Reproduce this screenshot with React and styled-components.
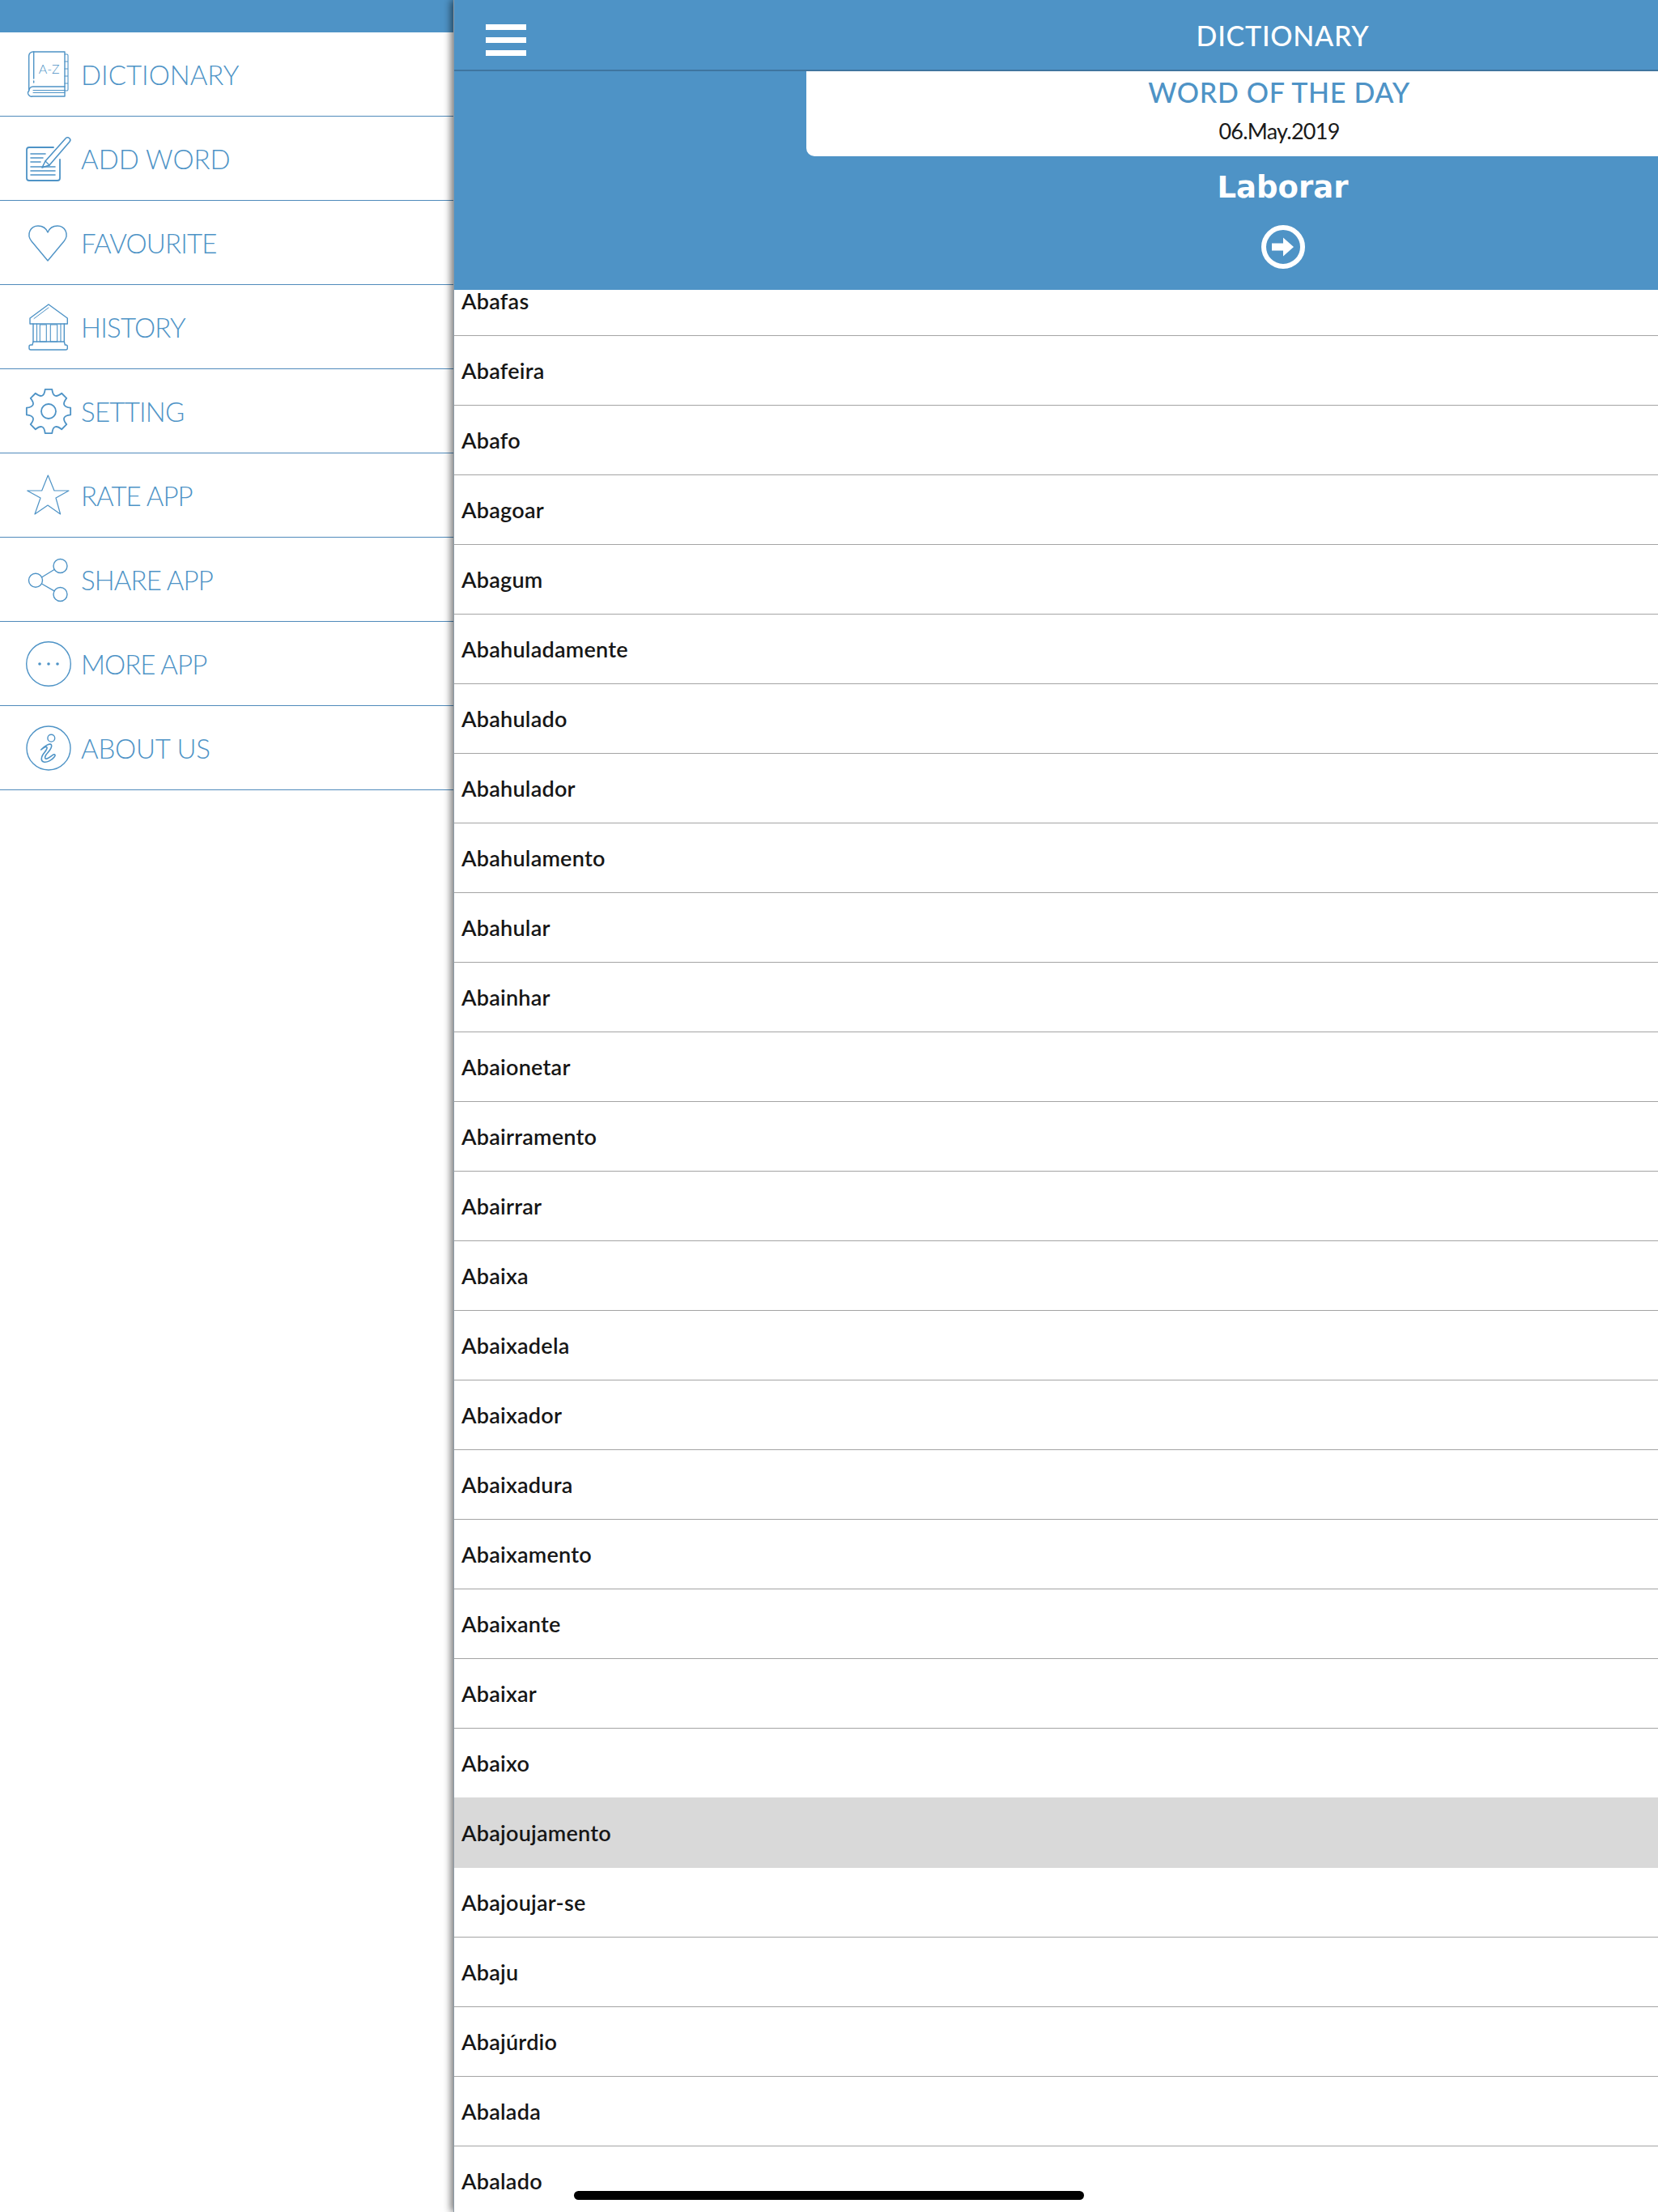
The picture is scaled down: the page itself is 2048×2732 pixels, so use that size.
import React from "react";
import styled, { createGlobalStyle } from "styled-components";

const BLUE = "#4e93c6";

const GlobalStyle = createGlobalStyle`
  html, body {
    margin: 0;
    padding: 0;
    background: #fff;
  }
  * {
    box-sizing: border-box;
  }
`;

const Screen = styled.div`
  display: flex;
  width: 2048px;
  height: 2732px;
  overflow: hidden;
  position: relative;
  font-family: "Lato", "Liberation Sans", sans-serif;
`;

const Drawer = styled.nav`
  width: 560px;
  flex-shrink: 0;
  background: #fff;
`;

const DrawerTop = styled.div`
  height: 40px;
  background: ${BLUE};
`;

const MenuItem = styled.div`
  display: flex;
  align-items: center;
  height: 104px;
  padding-left: 30px;
  border-bottom: 1px solid #4f8abb;
`;

const MenuIcon = styled.svg`
  width: 60px;
  height: 60px;
  flex-shrink: 0;
  fill: none;
  stroke: ${BLUE};
  stroke-width: 1.4;
  stroke-linejoin: round;
  stroke-linecap: round;
`;

const MenuLabel = styled.span`
  margin-left: 10px;
  font-size: 33px;
  font-weight: 300;
  color: ${BLUE};
  letter-spacing: ${(p) => p.$track}px;
  white-space: nowrap;
`;

/* the panel keeps the full screen width while the drawer pushes it aside */
const Main = styled.main`
  width: 2048px;
  flex-shrink: 0;
  display: flex;
  flex-direction: column;
  background: #fff;
  position: relative;
  box-shadow: -3px 0 9px rgba(0, 0, 0, 0.55);
  border-left: 1px solid #8d9aa5;
`;

const Banner = styled.header`
  height: 358px;
  flex-shrink: 0;
  background: ${BLUE};
  display: flex;
  flex-direction: column;
  position: relative;
  z-index: 1;
`;

const TopBar = styled.div`
  height: 88px;
  flex-shrink: 0;
  display: grid;
  grid-template-columns: 1fr auto 1fr;
  align-items: center;
  padding-left: 39px;
  border-bottom: 2px solid #3f759f;
`;

const Burger = styled.div`
  width: 50px;
  margin-top: 13px;
  display: flex;
  flex-direction: column;
  gap: 9px;
  span {
    display: block;
    height: 7px;
    background: #fff;
  }
`;

const TopTitle = styled.h1`
  margin: 0 0 0 -39px;
  font-size: 34px;
  font-weight: 500;
  color: #fff;
  letter-spacing: 0.75px;
`;

const WordCard = styled.div`
  margin-left: 435px;
  width: 1168px;
  height: 105px;
  flex-shrink: 0;
  background: #fff;
  border-bottom-left-radius: 10px;
  display: flex;
  flex-direction: column;
  align-items: center;
`;

const CardTitle = styled.div`
  margin-top: 6px;
  font-size: 34px;
  line-height: 40px;
  font-weight: 500;
  color: ${BLUE};
  letter-spacing: 0.7px;
`;

const CardDate = styled.div`
  margin-top: 11px;
  font-size: 27px;
  line-height: 34px;
  color: #1a1a1a;
  letter-spacing: -0.75px;
`;

const WordName = styled.div`
  margin-top: 17px;
  text-align: center;
  font-family: "DejaVu Sans", sans-serif;
  font-size: 37px;
  line-height: 44px;
  font-weight: 700;
  color: #fff;
`;

const GoIcon = styled.svg`
  display: block;
  width: 54px;
  height: 54px;
  margin: 24px auto 0;
`;

const ListViewport = styled.div`
  flex: 1;
  min-height: 0;
  overflow: hidden;
`;

const WordList = styled.div`
  margin-top: -29px;
`;

const WordRow = styled.div`
  display: flex;
  align-items: center;
  height: 86px;
  padding: 0 0 1px 9px;
  font-size: 27px;
  font-weight: 600;
  letter-spacing: 0.25px;
  color: #161616;
  background: #fff;
  border-bottom: 1px solid #a4a4a4;
`;

// the selected row has no rules of its own and covers the one above it
const ActiveRow = styled(WordRow)`
  height: 87px;
  margin-top: -1px;
  padding-top: 1px;
  background: #d9d9d9;
  border-bottom-color: #d9d9d9;
`;

const HomeBar = styled.div`
  position: absolute;
  left: 709px;
  bottom: 15px;
  width: 630px;
  height: 11px;
  border-radius: 6px;
  background: #000;
  z-index: 2;
`;

const DictIcon = () => (
  <MenuIcon viewBox="0 0 60 60">
    <path d="M5.700 50V7a5 5 0 0 1 5-5H50v43" />
    <path d="M5.700 50a5 5 0 0 1 5-5H50v12H10a4.300 4.300 0 0 1-4.300-7z" />
    <path d="M11.700 2v33M11.700 38v2" />
    <path d="M11 49.500h39M11 52.500h39" strokeWidth="1.100" />
    <path
      strokeWidth="1.100"
      d="M50 5h2.500a1.500 1.500 0 0 1 1.500 1.500v42a1.500 1.500 0 0 1-1.500 1.500H50M50 14h4M50 23h4M50 32h4M50 41h4"
    />
    <text x="30.700" y="28.500" textAnchor="middle" fontFamily="Lato, sans-serif" fontWeight="300" fontSize="16" fill={BLUE} stroke="none">
      A-Z
    </text>
  </MenuIcon>
);

const AddWordIcon = () => (
  <MenuIcon viewBox="0 0 60 60">
    <path d="M36 16H6a3 3 0 0 0-3 3v35a3 3 0 0 0 3 3h35a3 3 0 0 0 3-3V31" strokeWidth="1.800" />
    <path d="M8 24h18M8 29h15M8 34h12M8 40h30M8 45h30M8 50h30" strokeWidth="1.600" />
    <path d="M26 33L51 5a3 3 0 0 1 5 4L31 38l-9 3z" strokeWidth="1.600" />
    <path d="M26 33l5 5" />
  </MenuIcon>
);

const HeartIcon = () => (
  <MenuIcon viewBox="0 0 60 60">
    <path d="M29 52L9 28C2 19 8 9 17 9c6 0 10 3 12 8 2-5 6-8 12-8 9 0 15 10 8 19z" />
  </MenuIcon>
);

const HistoryIcon = () => (
  <MenuIcon viewBox="0 0 60 60">
    <path d="M30 2L7 19v7h46.300v-7z" />
    <path d="M30 6L12 19.500" strokeWidth="1" />
    <path d="M11 26v22M49.300 26v22" />
    <path d="M15.500 26v22M19.300 27h8v21h-8zM32.300 27h8.400v21h-8.400zM45 26v22" strokeWidth="1.100" />
    <path d="M11 48h38.300l1 4h1a2 2 0 0 1 2 2v2a2 2 0 0 1-2 2H8a2 2 0 0 1-2-2v-2a2 2 0 0 1 2-2h2z" />
  </MenuIcon>
);

const polar = (deg, r) => {
  const a = (deg * Math.PI) / 180;
  return `${(30 + r * Math.cos(a)).toFixed(2)} ${(30 + r * Math.sin(a)).toFixed(2)}`;
};

// eight rounded teeth
const gearPath = () => {
  let d = `M${polar(-99, 27.5)}`;
  for (let i = 0; i < 8; i++) {
    const a = -90 + i * 45;
    d += ` L${polar(a + 9, 27.5)} Q${polar(a + 22.5, 15)} ${polar(a + 36, 27.5)}`;
  }
  return d + "Z";
};

const GearIcon = () => (
  <MenuIcon viewBox="0 0 60 60">
    <circle cx="30" cy="30" r="9" strokeWidth="1.800" />
    <path strokeWidth="1.800" d={gearPath()} />
  </MenuIcon>
);

const StarIcon = () => (
  <MenuIcon viewBox="0 0 60 60">
    <path strokeWidth="1.200" d="M29.300 5L37 24h18L39 33l5.600 20L29 42 13 53l7-20L3.700 24h18z" />
  </MenuIcon>
);

const ShareIcon = () => (
  <MenuIcon viewBox="0 0 60 60">
    <circle cx="44.500" cy="13" r="8.500" />
    <circle cx="14" cy="30.700" r="8.500" />
    <circle cx="44.500" cy="48" r="8.500" />
    <path d="M37 17.500L21.500 27M21.500 35L37 43.800" />
  </MenuIcon>
);

const MoreIcon = () => (
  <MenuIcon viewBox="0 0 60 60">
    <circle cx="30" cy="30" r="27.300" />
    <g fill={BLUE} stroke="none">
      <circle cx="19" cy="30" r="1.800" />
      <circle cx="30" cy="30" r="1.800" />
      <circle cx="41" cy="30" r="1.800" />
    </g>
  </MenuIcon>
);

const AboutIcon = () => (
  <MenuIcon viewBox="0 0 60 60">
    <circle cx="30" cy="30" r="27" />
    <circle cx="33.300" cy="17.700" r="4.400" />
    <path
      strokeWidth="1.600"
      d="M20.700 32C24 28 32 23 33.500 26 35 30 30 34 27 38 25 41 25 44 28 43 31 42 34 39 36 38 38 37 39 39 37 41 34 45 28 48 24 47 20 46 21 41 23 38 25 35 29 31 28 29 27 27 23 30 20.700 32Z"
    />
  </MenuIcon>
);

const menu = [
  { label: "DICTIONARY", Icon: DictIcon, track: 0 },
  { label: "ADD WORD", Icon: AddWordIcon, track: 0 },
  { label: "FAVOURITE", Icon: HeartIcon, track: -0.8 },
  { label: "HISTORY", Icon: HistoryIcon, track: -0.75 },
  { label: "SETTING", Icon: GearIcon, track: -0.75 },
  { label: "RATE APP", Icon: StarIcon, track: -0.95 },
  { label: "SHARE APP", Icon: ShareIcon, track: -0.9 },
  { label: "MORE APP", Icon: MoreIcon, track: -0.95 },
  { label: "ABOUT US", Icon: AboutIcon, track: -0.2 },
];

const words = [
  "Abafas", "Abafeira", "Abafo", "Abagoar", "Abagum", "Abahuladamente", "Abahulado",
  "Abahulador", "Abahulamento", "Abahular", "Abainhar", "Abaionetar", "Abairramento",
  "Abairrar", "Abaixa", "Abaixadela", "Abaixador", "Abaixadura", "Abaixamento",
  "Abaixante", "Abaixar", "Abaixo", "Abajoujamento", "Abajoujar-se", "Abaju",
  "Abajúrdio", "Abalada", "Abalado",
];

export default function App() {
  return (
    <Screen>
      <GlobalStyle />
      <Drawer>
        <DrawerTop />
        {menu.map(({ label, Icon, track }) => (
          <MenuItem key={label}>
            <Icon />
            <MenuLabel $track={track}>{label}</MenuLabel>
          </MenuItem>
        ))}
      </Drawer>
      <Main>
        <Banner>
          <TopBar>
            <Burger>
              <span />
              <span />
              <span />
            </Burger>
            <TopTitle>DICTIONARY</TopTitle>
          </TopBar>
          <WordCard>
            <CardTitle>WORD OF THE DAY</CardTitle>
            <CardDate>06.May.2019</CardDate>
          </WordCard>
          <WordName>Laborar</WordName>
          <GoIcon viewBox="0 0 54 54">
            <circle cx="27" cy="27" r="24" fill="none" stroke="#fff" strokeWidth="6" />
            <path d="M13 22.500h14V15.500L40 27 27 38.500V31.500H13z" fill="#fff" />
          </GoIcon>
        </Banner>
        <ListViewport>
          <WordList>
            {words.map((w) =>
              w === "Abajoujamento" ? <ActiveRow key={w}>{w}</ActiveRow> : <WordRow key={w}>{w}</WordRow>
            )}
          </WordList>
        </ListViewport>
      </Main>
      <HomeBar />
    </Screen>
  );
}
